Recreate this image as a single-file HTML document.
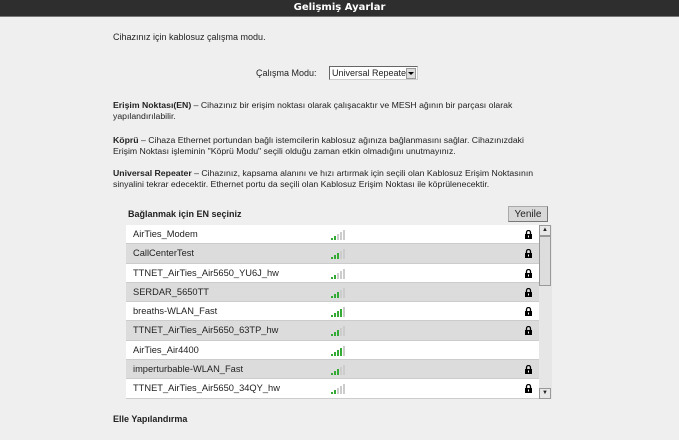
<!DOCTYPE html><html><head><meta charset="utf-8"><style>
body{margin:0;width:679px;height:440px;background:#efefef;font-family:"Liberation Sans",Arial,sans-serif;font-size:9px;color:#222;position:relative;overflow:hidden}
.hd{position:absolute;left:0;top:0;width:679px;height:16px;background:#2e2e2e;border-bottom:1px solid #777;color:#fff;font-weight:bold;font-size:10px;text-align:center;line-height:16px;font-family:"DejaVu Sans",sans-serif}
.t{position:absolute;white-space:nowrap;line-height:11px}
.p{font-size:8.7px}
.sel{position:absolute;left:329px;top:66px;width:89px;height:14px;background:#fff;border:1px solid #666;border-right-color:#ccc;border-bottom-color:#ccc;font-size:9px;line-height:12px;box-sizing:border-box;padding-left:2px;white-space:nowrap}
.sel i{position:absolute;right:1px;top:1px;width:8px;height:9px;background:#ddd;border:1px solid #999}
.sel i:after{content:"";position:absolute;left:1px;top:3px;border:3px solid transparent;border-top:3px solid #000;border-bottom:0}
.btn{position:absolute;left:508px;top:206px;width:40px;height:16px;background:#d8d8d8;border:1px solid #aaa;border-right-color:#777;border-bottom-color:#777;font-size:10px;text-align:center;line-height:16px;box-sizing:border-box}
.list{position:absolute;left:126px;top:225px;width:413px}
.r{height:19.3px;line-height:19px;border-bottom:1px solid #ccc;box-sizing:border-box;padding-left:7px;position:relative;background:#fff;font-size:9.3px}
.r:nth-child(even){background:#dcdcdc}
.sig{position:absolute;left:205px;top:5px}
.lk{position:absolute;left:399px;top:5px;width:7px;height:9px}
.sb{position:absolute;left:539px;top:225px;width:13px;height:174px;background:#e6e6e6}
.sb .th{position:absolute;left:0;top:11px;width:12px;height:50px;background:#ddd;border:1px solid #999;box-sizing:border-box}
.sb .a{position:absolute;left:0;width:12px;height:11px;background:#e8e8e8;border:1px solid #999;box-sizing:border-box;font-size:6px;text-align:center;line-height:9px}
</style></head><body>
<div class="hd">Gelişmiş Ayarlar</div>
<div class="t" style="left:113px;top:32px">Cihazınız için kablosuz çalışma modu.</div>
<div class="t" style="left:256px;top:68px">Çalışma Modu:</div>
<div class="sel">Universal Repeater<i></i></div>
<div class="t p" style="left:113px;top:100px"><b>Erişim Noktası(EN)</b> – Cihazınız bir erişim noktası olarak çalışacaktır ve MESH ağının bir parçası olarak<br>yapılandırılabilir.</div>
<div class="t p" style="left:113px;top:135px"><b>Köprü</b> – Cihaza Ethernet portundan bağlı istemcilerin kablosuz ağınıza bağlanmasını sağlar. Cihazınızdaki<br>Erişim Noktası işleminin "Köprü Modu" seçili olduğu zaman etkin olmadığını unutmayınız.</div>
<div class="t p" style="left:113px;top:168px"><b>Universal Repeater</b> – Cihazınız, kapsama alanını ve hızı artırmak için seçili olan Kablosuz Erişim Noktasının<br>sinyalini tekrar edecektir. Ethernet portu da seçili olan Kablosuz Erişim Noktası ile köprülenecektir.</div>
<div class="t" style="left:128px;top:209px;font-weight:bold">Bağlanmak için EN seçiniz</div>
<div class="btn">Yenile</div>
<svg width="0" height="0" style="position:absolute"><defs>
<g id="s2"><rect x="0" y="8" width="2" height="2" fill="#3a3"/><rect x="3" y="6" width="2" height="4" fill="#3a3"/><rect x="6" y="4" width="2" height="6" fill="#ccc"/><rect x="9" y="2" width="2" height="8" fill="#ccc"/><rect x="12" y="0" width="2" height="10" fill="#ccc"/></g>
<g id="s3"><rect x="0" y="8" width="2" height="2" fill="#3a3"/><rect x="3" y="6" width="2" height="4" fill="#3a3"/><rect x="6" y="4" width="2" height="6" fill="#3a3"/><rect x="9" y="2" width="2" height="8" fill="#ccc"/><rect x="12" y="0" width="2" height="10" fill="#ccc"/></g>
<g id="s4"><rect x="0" y="8" width="2" height="2" fill="#3a3"/><rect x="3" y="6" width="2" height="4" fill="#3a3"/><rect x="6" y="4" width="2" height="6" fill="#3a3"/><rect x="9" y="2" width="2" height="8" fill="#3a3"/><rect x="12" y="0" width="2" height="10" fill="#ccc"/></g>
<g id="lk"><path d="M1.5 4V2.5a2 2 0 0 1 4 0V4" fill="none" stroke="#000" stroke-width="1.3"/><rect x="0" y="4" width="7" height="5" fill="#000"/><rect x="3" y="5.5" width="1" height="2" fill="#fff"/></g>
</defs></svg>
<div class="list">
<div class="r">AirTies_Modem<svg class="sig" width="15" height="10"><use href="#s2"/></svg><svg class="lk"><use href="#lk"/></svg></div>
<div class="r">CallCenterTest<svg class="sig" width="15" height="10"><use href="#s3"/></svg><svg class="lk"><use href="#lk"/></svg></div>
<div class="r">TTNET_AirTies_Air5650_YU6J_hw<svg class="sig" width="15" height="10"><use href="#s2"/></svg><svg class="lk"><use href="#lk"/></svg></div>
<div class="r">SERDAR_5650TT<svg class="sig" width="15" height="10"><use href="#s3"/></svg><svg class="lk"><use href="#lk"/></svg></div>
<div class="r">breaths-WLAN_Fast<svg class="sig" width="15" height="10"><use href="#s4"/></svg><svg class="lk"><use href="#lk"/></svg></div>
<div class="r">TTNET_AirTies_Air5650_63TP_hw<svg class="sig" width="15" height="10"><use href="#s3"/></svg><svg class="lk"><use href="#lk"/></svg></div>
<div class="r">AirTies_Air4400<svg class="sig" width="15" height="10"><use href="#s4"/></svg></div>
<div class="r">imperturbable-WLAN_Fast<svg class="sig" width="15" height="10"><use href="#s3"/></svg><svg class="lk"><use href="#lk"/></svg></div>
<div class="r">TTNET_AirTies_Air5650_34QY_hw<svg class="sig" width="15" height="10"><use href="#s2"/></svg><svg class="lk"><use href="#lk"/></svg></div>
</div>
<div class="sb"><div class="a" style="top:0">▲</div><div class="th"></div><div class="a" style="bottom:0">▼</div></div>
<div class="t" style="left:113px;top:414px;font-weight:bold">Elle Yapılandırma</div>
</body></html>
